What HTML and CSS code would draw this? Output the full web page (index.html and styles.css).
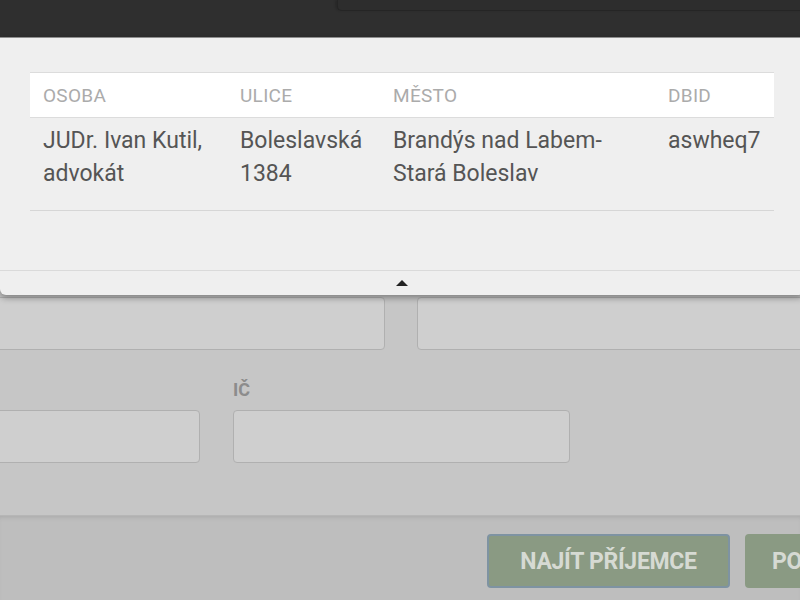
FILE: index.html
```html
<!DOCTYPE html>
<html lang="cs">
<head>
    <meta charset="UTF-8">
    <meta name="viewport" content="width=device-width, initial-scale=1.0">
    <title>Příjemce</title>
    <link rel="stylesheet" href="styles.css">
</head>
<body>
    <div class="topbar">
        <div class="search-box"></div>
    </div>

    <div class="form">
        <div class="form-row row-wide">
            <div class="field">
                <div class="input"></div>
            </div>
            <div class="field">
                <div class="input"></div>
            </div>
        </div>
        <div class="form-row row-narrow">
            <div class="field">
                <label>&nbsp;</label>
                <div class="input"></div>
            </div>
            <div class="field">
                <label>IČ</label>
                <div class="input"></div>
            </div>
        </div>
    </div>

    <div class="actions">
        <button class="btn focused">Najít příjemce</button>
        <button class="btn">Potvrdit</button>
    </div>

    <!-- dropdown with search results, lies over the form -->
    <div class="results">
        <table class="results-table">
            <colgroup>
                <col class="col-person">
                <col class="col-street">
                <col class="col-city">
                <col class="col-dbid">
            </colgroup>
            <thead>
                <tr>
                    <th>Osoba</th>
                    <th>Ulice</th>
                    <th>Město</th>
                    <th>DBID</th>
                </tr>
            </thead>
            <tbody>
                <tr>
                    <td>JUDr. Ivan Kutil, advokát</td>
                    <td>Boleslavská 1384</td>
                    <td>Brandýs nad Labem-Stará Boleslav</td>
                    <td>aswheq7</td>
                </tr>
            </tbody>
        </table>
        <div class="results-toggle">
            <span class="arrow-up"></span>
        </div>
    </div>
</body>
</html>
```

FILE: styles.css
```css
body {
    margin: 0;
    padding: 0;
    width: 800px;
    height: 600px;
    overflow: hidden;
    position: relative;
    background: #c6c6c6;
    font-family: Roboto, "Liberation Sans", sans-serif;
}

.topbar {
    height: 37px;
    background: #2f2f2f;
    display: flex;
    justify-content: flex-end;
}

.search-box {
    width: 470px;
    height: 10px;
    margin-right: -8px;
    background: #2d2d2d;
    border-left: 1px solid #252525;
    border-bottom: 1px solid #252525;
    border-bottom-left-radius: 5px;
    box-shadow: -2px 0 2px rgba(0, 0, 0, 0.15);
}

.form {
    padding-top: 260px;
    margin-left: -30px;
}

.form-row {
    display: grid;
    margin-bottom: 30px;
}

.row-wide {
    grid-template-columns: 415px 415px;
    gap: 32px;
}

.row-narrow {
    grid-template-columns: 230px 337px;
    gap: 33px;
}

.field label {
    display: block;
    height: 20px;
    line-height: 20px;
    margin-bottom: 10px;
    font-size: 18px;
    font-weight: 700;
    color: #8c8c8c;
    text-transform: uppercase;
}

.input {
    height: 51px;
    background: #cfcfcf;
    border: 1px solid #b0b0b0;
    border-radius: 4px;
}

.actions {
    position: absolute;
    left: 0;
    right: 0;
    top: 515px;
    bottom: 0;
    background: #bebebe;
    border-top: 1px solid #b6b6b6;
    box-shadow: inset 0 4px 5px -3px rgba(0, 0, 0, 0.12);
    display: flex;
    gap: 15px;
    padding: 18px 0 0 487px;
}

.btn {
    flex-shrink: 0;
    height: 54px;
    padding: 0 25px;
    background: #8a9a83;
    border: 2px solid #8a9a83;
    border-radius: 4px;
    font-family: Roboto, "Liberation Sans", sans-serif;
    font-size: 23px;
    font-weight: 700;
    letter-spacing: -0.3px;
    color: #d6dad3;
    text-transform: uppercase;
    text-align: left;
}

.btn.focused {
    width: 243px;
    padding: 0;
    text-align: center;
    border-color: #7e93a2;
}

.results {
    position: absolute;
    top: 37px;
    left: 0;
    width: 804px;
    background: #efefef;
    border-top: 1px solid #8e8e8e;
    border-radius: 0 0 6px 6px;
    box-shadow: 0 3px 6px rgba(0, 0, 0, 0.35);
    padding-top: 34px;
}

.results-table {
    margin: 0 30px;
    width: 744px;
    table-layout: fixed;
    border-collapse: collapse;
}

.col-person { width: 197px; }
.col-street { width: 153px; }
.col-city { width: 275px; }
.col-dbid { width: 119px; }

.results-table th {
    height: 43px;
    padding: 1px 13px 0;
    background: #fff;
    border-top: 1px solid #dcdcdc;
    border-bottom: 1px solid #dcdcdc;
    text-align: left;
    font-size: 19px;
    font-weight: 400;
    letter-spacing: 0.3px;
    color: #ababab;
    text-transform: uppercase;
}

.results-table td {
    padding: 6px 13px 20px;
    vertical-align: top;
    font-size: 23px;
    line-height: 33px;
    color: #555;
    border-bottom: 1px solid #d6d6d6;
}

.results-toggle {
    margin-top: 59px;
    height: 24px;
    border-top: 1px solid #dadada;
    display: flex;
    justify-content: center;
    align-items: center;
}

.arrow-up {
    width: 0;
    height: 0;
    border-left: 6px solid transparent;
    border-right: 6px solid transparent;
    border-bottom: 6px solid #222;
}
```
